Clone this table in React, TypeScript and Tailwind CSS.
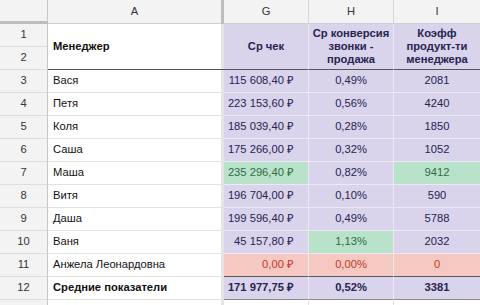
import React from 'react';

type Tone = 'plain' | 'green' | 'red';

interface Row {
  n: number;
  name: string;
  g: string;
  h: string;
  i: string;
  tones?: [Tone, Tone, Tone];
  bold?: boolean;
}

const rows: Row[] = [
  { n: 3, name: 'Вася', g: '115 608,40 ₽', h: '0,49%', i: '2081' },
  { n: 4, name: 'Петя', g: '223 153,60 ₽', h: '0,56%', i: '4240' },
  { n: 5, name: 'Коля', g: '185 039,40 ₽', h: '0,28%', i: '1850' },
  { n: 6, name: 'Саша', g: '175 266,00 ₽', h: '0,32%', i: '1052' },
  { n: 7, name: 'Маша', g: '235 296,40 ₽', h: '0,82%', i: '9412', tones: ['green', 'plain', 'green'] },
  { n: 8, name: 'Витя', g: '196 704,00 ₽', h: '0,10%', i: '590' },
  { n: 9, name: 'Даша', g: '199 596,40 ₽', h: '0,49%', i: '5788' },
  { n: 10, name: 'Ваня', g: '45 157,80 ₽', h: '1,13%', i: '2032', tones: ['plain', 'green', 'plain'] },
  { n: 11, name: 'Анжела Леонардовна', g: '0,00 ₽', h: '0,00%', i: '0', tones: ['red', 'red', 'red'] },
  { n: 12, name: 'Средние показатели', g: '171 977,75 ₽', h: '0,52%', i: '3381', bold: true },
];

const toneClass: Record<Tone, string> = {
  plain: 'bg-[#d9d3eb] text-[#27244f]',
  green: 'bg-[#b9e2cb] text-[#2f6e43]',
  red: 'bg-[#f5c8c2] text-[#c2392b]',
};

function RowNum({ n, className = '' }: { n: number | string; className?: string }) {
  return (
    <div className={`w-[48px] shrink-0 flex items-center justify-center bg-[#f3f3f3] border-r border-r-[#c6c6c6] border-b border-b-[#dcdcdc] text-[#333] ${className}`}>
      {n}
    </div>
  );
}

export default function App() {
  return (
    <div className="w-[480px] h-[305px] overflow-hidden bg-white text-[11.2px] leading-none font-['Liberation_Sans',Arial,sans-serif]">
      {/* column headers */}
      <div className="flex h-[24px]">
        <div className="w-[48px] shrink-0 bg-[#f3f3f3] border-r border-r-[#c6c6c6] border-b-[3px] border-b-[#bdbdbd]" />
        <div className="w-[173px] shrink-0 flex items-center justify-center bg-[#f3f3f3] border-b border-b-[#cfcfcf] text-[#333]">A</div>
        <div className="w-[3px] shrink-0 bg-[#bdbdbd]" />
        <div className="w-[85px] shrink-0 flex items-center justify-center bg-[#f3f3f3] border-r border-r-[#d6d6d6] border-b border-b-[#cfcfcf] text-[#333]">G</div>
        <div className="w-[85px] shrink-0 flex items-center justify-center bg-[#f3f3f3] border-r border-r-[#d6d6d6] border-b border-b-[#cfcfcf] text-[#333]">H</div>
        <div className="w-[86px] shrink-0 flex items-center justify-center bg-[#f3f3f3] border-b border-b-[#cfcfcf] text-[#333]">I</div>
      </div>

      {/* merged header rows 1-2 */}
      <div className="flex h-[46px]">
        <div className="flex flex-col">
          <RowNum n={1} className="h-[23px]" />
          <RowNum n={2} className="h-[23px]" />
        </div>
        <div className="w-[173px] shrink-0 flex items-center pl-[5px] font-bold text-[#111] border-b border-b-[#555]">
          Менеджер
        </div>
        <div className="w-[3px] shrink-0 bg-[#e4e4e4] border-b border-b-[#555]" />
        <div className="w-[85px] shrink-0 flex items-center justify-center text-center font-bold leading-[13px] bg-[#d9d3eb] text-[#27244f] border-r border-r-[#ece9f4] border-b border-b-[#555]">
          Ср чек
        </div>
        <div className="w-[85px] shrink-0 flex items-center justify-center text-center font-bold leading-[13px] bg-[#d9d3eb] text-[#27244f] border-r border-r-[#ece9f4] border-b border-b-[#555]">
          Ср конверсия<br />звонки -<br />продажа
        </div>
        <div className="w-[86px] shrink-0 flex items-center justify-center text-center font-bold leading-[13px] bg-[#d9d3eb] text-[#27244f] border-b border-b-[#555]">
          Коэфф<br />продукт-ти<br />менеджера
        </div>
      </div>

      {/* data rows */}
      {rows.map((r) => {
        const t = r.tones ?? ['plain', 'plain', 'plain'];
        const bottom =
          r.n === 11
            ? 'border-b-[#5a5a5a]'
            : r.n === 12
            ? 'border-b-[#8a8a8a]'
            : 'border-b-[#ece9f4]';
        const weight = r.bold ? 'font-bold' : '';
        return (
          <div key={r.n} className="flex h-[23px]">
            <RowNum n={r.n} />
            <div className={`w-[173px] shrink-0 flex items-center pl-[5px] text-[#111] border-b border-b-[#e2e2e2] ${weight}`}>
              {r.name}
            </div>
            <div className="w-[3px] shrink-0 bg-[#e4e4e4]" />
            <div className={`w-[85px] shrink-0 flex items-center justify-end pr-[14px] border-r border-r-[#ece9f4] border-b ${bottom} ${toneClass[t[0]]} ${weight}`}>
              {r.g}
            </div>
            <div className={`w-[85px] shrink-0 flex items-center justify-center border-r border-r-[#ece9f4] border-b ${bottom} ${toneClass[t[1]]} ${weight}`}>
              {r.h}
            </div>
            <div className={`w-[86px] shrink-0 flex items-center justify-center border-b ${bottom} ${toneClass[t[2]]} ${weight}`}>
              {r.i}
            </div>
          </div>
        );
      })}

      {/* row 13, cut off at the window edge */}
      <div className="flex h-[23px]">
        <RowNum n={13} />
        <div className="w-[173px] shrink-0" />
        <div className="w-[3px] shrink-0 bg-[#e4e4e4]" />
        <div className="w-[85px] shrink-0 border-r border-r-[#e2e2e2]" />
        <div className="w-[85px] shrink-0 border-r border-r-[#e2e2e2]" />
        <div className="w-[86px] shrink-0" />
      </div>
    </div>
  );
}
